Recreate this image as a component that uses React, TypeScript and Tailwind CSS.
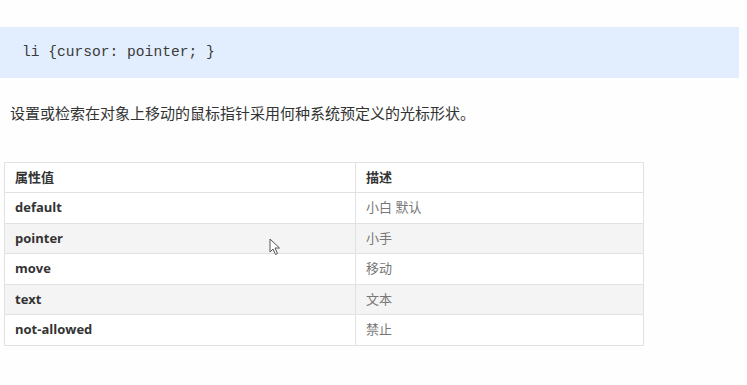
import React from 'react';

interface Row {
  value: string;
  desc: string;
}

const rows: Row[] = [
  { value: 'default', desc: '小白 默认' },
  { value: 'pointer', desc: '小手' },
  { value: 'move', desc: '移动' },
  { value: 'text', desc: '文本' },
  { value: 'not-allowed', desc: '禁止' },
];

const cjk = "font-['Open_Sans','Noto_Sans_CJK_SC',sans-serif]";

export default function App() {
  return (
    <div className={`relative w-[747px] h-[385px] bg-[#fdfefd] overflow-hidden ${cjk}`}>
      {/* code block */}
      <div className="mt-[27px] w-[739px] h-[51px] bg-[#e2eefd] flex items-center pl-[22px]">
        <span className="font-['Liberation_Mono',monospace] text-[14.6px] text-[#3a3a3a]">
          li {'{'}cursor: pointer; {'}'}
        </span>
      </div>

      <p className="mt-[25px] pl-[10px] text-[15px] leading-[20px] text-[#333] font-['Noto_Sans_CJK_SC',sans-serif]">
        设置或检索在对象上移动的鼠标指针采用何种系统预定义的光标形状。
      </p>

      {/* table */}
      <table className="mt-[39px] ml-[4px] w-[640px] border-collapse text-[13px]">
        <thead>
          <tr className="h-[30px] bg-white">
            <th className="w-[351px] border border-[#e2e2e2] pl-[10px] text-left font-bold text-[#333]">属性值</th>
            <th className="border border-[#e2e2e2] pl-[10px] text-left font-bold text-[#333]">描述</th>
          </tr>
        </thead>
        <tbody>
          {rows.map((r, i) => (
            <tr key={r.value} className={`h-[30.5px] ${i % 2 === 1 ? 'bg-[#f4f4f4]' : 'bg-white'}`}>
              <td className="border border-[#e2e2e2] pl-[10px] font-bold text-[#333]">{r.value}</td>
              <td className="border border-[#e2e2e2] pl-[10px] text-[#777]">{r.desc}</td>
            </tr>
          ))}
        </tbody>
      </table>

      {/* mouse pointer captured in the screenshot */}
      <svg className="absolute left-[269px] top-[238px]" width="12" height="18" viewBox="0 0 12 18">
        <path d="M1 1 L1 14 L4 11 L6.5 16.5 L8.5 15.5 L6 10 L10.5 10 Z" fill="#fff" stroke="#555" strokeWidth="1" strokeLinejoin="round" />
      </svg>
    </div>
  );
}
